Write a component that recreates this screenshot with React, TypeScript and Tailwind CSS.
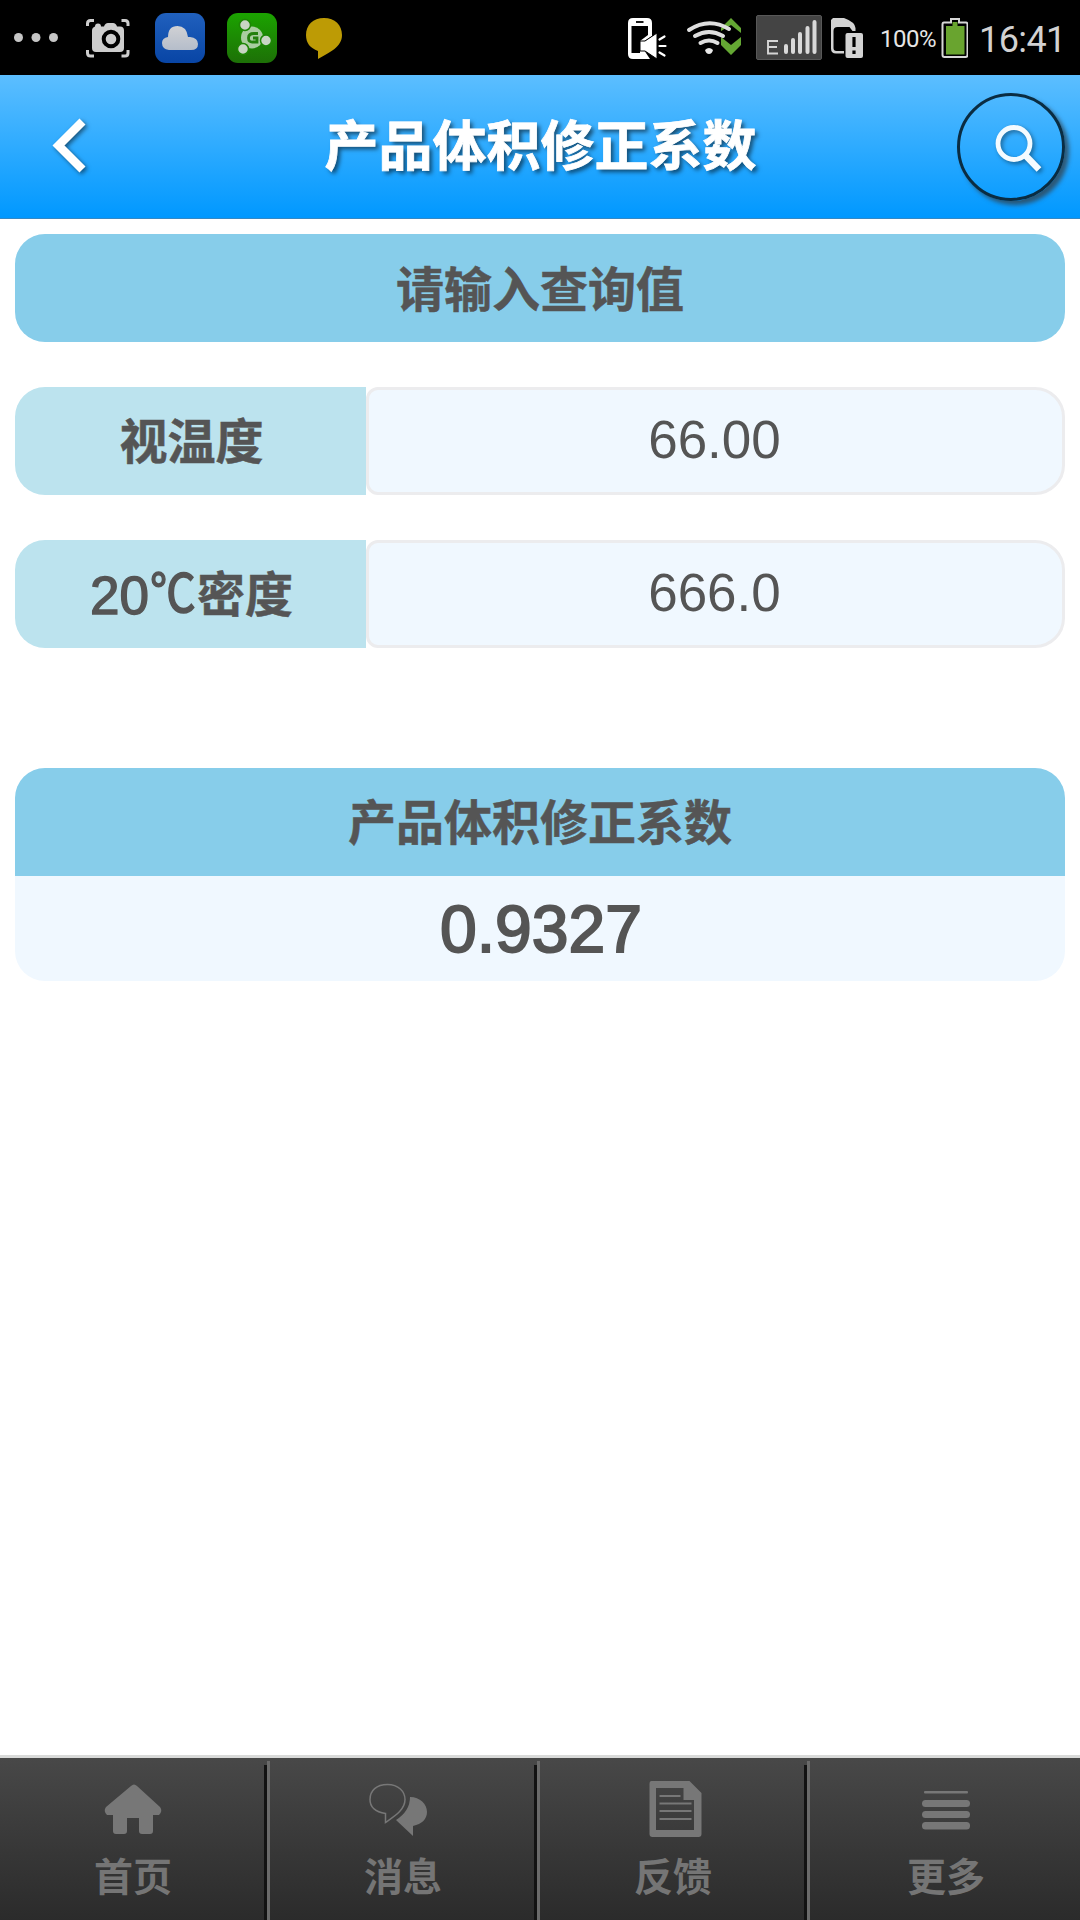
import type { ReactNode } from 'react';

const CJK = "font-['Liberation_Sans','Noto_Sans_CJK_SC',sans-serif]";

function StatusBar() {
  return (
    <div className="h-[75px] bg-black flex items-start shrink-0 font-['Roboto',sans-serif]">
      <svg className="ml-[12px] w-[48px] h-[75px]" viewBox="12 0 48 75" fill="#c6c6c6">
        <circle cx="18.500" cy="37.500" r="4.500" />
        <circle cx="36" cy="37.500" r="4.500" />
        <circle cx="53.500" cy="37.500" r="4.500" />
      </svg>
      <svg className="ml-[24px] w-[48px] h-[75px]" viewBox="84 0 48 75" fill="none">
        <path d="M87.500 26v-2.500q0-3 3-3h3.500M121.500 20.500h3.500q3 0 3 3V26M87.500 50v3q0 3 3 3h3.500M121.500 56h3.500q3 0 3-3v-3" stroke="#cdcdcd" strokeWidth="3" />
        <path d="M95 26.500q0-3 3-3t3 3h3q1-3.500 4-3.500h5q3 0 4 3.500h3q4 0 4 4V48q0 4-4 4H96q-4 0-4-4V30.500q0-3 3-4z" fill="#cdcdcd" />
        <circle cx="111" cy="39" r="7.300" stroke="#000" strokeWidth="4" />
      </svg>
      <svg className="ml-[23px] w-[50px] h-[75px]" viewBox="155 0 50 75">
        <defs>
          <linearGradient id="cloudBg" x1="0" y1="0" x2="0" y2="1">
            <stop offset="0" stopColor="#2060bd" />
            <stop offset="1" stopColor="#0845a5" />
          </linearGradient>
          <linearGradient id="cloudFg" x1="0" y1="0" x2="0" y2="1">
            <stop offset="0" stopColor="#d0d1d4" />
            <stop offset="1" stopColor="#b5bdca" />
          </linearGradient>
        </defs>
        <rect x="155" y="13" width="50" height="50" rx="11" fill="url(#cloudBg)" />
        <path d="M169 50q-7-1-7-7 0-5 6-6 0-11 9.500-11 9 0 10.500 11h2q8 1 8 7 0 6-7 6z" fill="url(#cloudFg)" />
      </svg>
      <svg className="ml-[22px] w-[50px] h-[75px]" viewBox="227 0 50 75">
        <defs>
          <linearGradient id="shareBg" x1="0" y1="0" x2="0" y2="1">
            <stop offset="0" stopColor="#1ba300" />
            <stop offset="1" stopColor="#1d7007" />
          </linearGradient>
        </defs>
        <rect x="227" y="13" width="50" height="50" rx="11" fill="url(#shareBg)" />
        <circle cx="252" cy="37.500" r="11" fill="#a9cda0" />
        <path d="M258 33.500h-4q-5.500 0-5.500 4.500t4.500 4h4v-4h-4" fill="none" stroke="#22800c" strokeWidth="2.800" />
        <g fill="#c8d5c4" stroke="#1d8605" strokeWidth="1.500">
          <circle cx="245" cy="25" r="5.500" />
          <circle cx="266" cy="40.500" r="5.500" />
          <circle cx="243" cy="49" r="5.500" />
        </g>
      </svg>
      <svg className="ml-[28px] w-[38px] h-[75px]" viewBox="305 0 38 75">
        <path d="M324 18c11 0 18 7 18 17 0 12-12 17-24 24v-8c-8-3-12-8-12-16 0-10 7-17 18-17z" fill="#bd9b05" />
      </svg>

      <svg className="ml-auto w-[42px] h-[75px]" viewBox="626 0 42 75">
        <path d="M633 18h14q5 0 5 5v13l-12 8 10 15h-17q-5 0-5-5V23q0-5 5-5z" fill="#fff" />
        <path d="M631.500 26h16.500v9l-8 6v12h-8.500z" fill="#000" />
        <path d="M636 22h7.500" stroke="#000" strokeWidth="1.800" />
        <path d="M640 41h5l12-8v26l-12-8h-5z" fill="#fff" stroke="#000" strokeWidth="1" />
        <path d="M659.500 39.500l5-3M659.500 46h6M659.500 52.500l5 3" stroke="#fff" strokeWidth="2.200" strokeLinecap="round" />
      </svg>
      <svg className="ml-[18px] w-[56px] h-[75px]" viewBox="686 0 56 75" fill="none">
        <path d="M721 31v-3l10-10 10 10v5l-10-8zM721 37l10 8 10-8v8l-10 10-10-10z" fill="#64a733" />
        <g stroke="#dedede" strokeWidth="4" strokeLinecap="round">
          <path d="M689 30q20-13 40-1" />
          <path d="M695 36q14-8 28 0" />
          <path d="M700.500 43q8.500-5 17 0" />
        </g>
        <path d="M705 50q4-4 8 0-1 4-4 4t-4-4z" fill="#e8e8e8" />
      </svg>
      <svg className="ml-[14px] w-[66px] h-[75px]" viewBox="756 0 66 75" fill="none">
        <rect x="756.500" y="15.500" width="65" height="44" rx="1.500" fill="#444" stroke="#585858" />
        <path d="M778 41h-10v12.500h10M768 47h9" stroke="#d5d5d5" strokeWidth="1.900" />
        <path d="M786 46v6M793 40v12M800 34v18M807.500 28v24M814.500 22v30" stroke="#d9d9d9" strokeWidth="4" strokeLinecap="round" />
      </svg>
      <svg className="ml-[9px] w-[34px] h-[75px]" viewBox="831 0 34 75" fill="none">
        <path d="M833 18h11q11 4 11.500 10v3h-3l-3-4h-12q-4 0-4 4v17q0 3 3 3h7.500v2.500h-8q-5 0-5-5V20z" fill="#d3d3d3" />
        <rect x="845.500" y="33" width="17.500" height="25" rx="2" fill="#d3d3d3" />
        <path d="M854 37v10M854 50.500v3.500" stroke="#000" strokeWidth="3.200" />
      </svg>
      <span className="ml-[15px] w-[58px] mt-[23px] text-[24px] leading-[32px] tracking-[-0.5px] text-[#e6e6e6]">100%</span>
      <svg className="ml-[3px] w-[27px] h-[75px]" viewBox="941 0 27 75">
        <path d="M944 22.500h7v-3.500h8v3.500h7q1.500 0 1.500 2V55q0 2-2 2h-21q-2 0-2-2V24.500q0-2 1.500-2z" fill="#000" stroke="#d7d7d7" strokeWidth="2" />
        <path d="M946 26h6.500v-4h5v4h7v28.500h-18.500z" fill="#69a42f" />
      </svg>
      <span className="ml-[11px] w-[101px] mt-[19px] text-[36px] leading-[42px] tracking-[-0.6px] text-[#d2d2d2]">16:41</span>
    </div>
  );
}

function Header() {
  return (
    <header className="h-[144px] shrink-0 flex items-center bg-linear-to-b/srgb from-[#5cbeff] to-[#0098ff] border-b border-[#3588c4]">
      <svg className="w-[123px] h-[144px] drop-shadow-[2px_2px_2px_rgba(0,0,0,0.5)]" viewBox="0 75 123 144" fill="none">
        <path d="M82.500 121.500L58.500 145.500l24 24" stroke="#fff" strokeWidth="8.500" />
      </svg>
      <h1 className="flex-1 text-center text-[54px] leading-[80px] font-bold text-white pl-[1px] mt-[1px] [-webkit-text-stroke:0.8px_#fff] [text-shadow:3px_3px_4px_rgba(0,0,0,0.55)]">产品体积修正系数</h1>
      <button className="mr-[15px] w-[108px] h-[108px] rounded-full border-[3px] border-[#0a2c42] shadow-[4px_4px_4px_rgba(50,70,85,0.8)]">
        <svg className="w-[102px] h-[102px] drop-shadow-[2px_2px_2px_rgba(0,0,0,0.4)]" viewBox="960 96 102 102" fill="none" stroke="#f4fbff">
          <circle cx="1014" cy="143.500" r="16" strokeWidth="4.800" />
          <path d="M1025.500 155.500l13.500 14" strokeWidth="6.500" />
        </svg>
      </button>
    </header>
  );
}

function Field({ label, value }: { label: ReactNode; value: string }) {
  return (
    <div className="flex h-[108px]">
      <div className="w-[351px] pl-[2px] pt-[4px] flex items-center justify-center rounded-l-[30px] bg-[#bce3ee] font-bold text-[48px] [-webkit-text-stroke:0.5px_#555]">
        {label}
      </div>
      <div className="flex-1 pr-[2px] pb-[2px] flex items-center justify-center rounded-l-[12px] rounded-r-[30px] border-[3px] border-[#ececee] bg-[#f0f8ff] text-[53px]">
        {value}
      </div>
    </div>
  );
}

function NavItem({ label, last, children }: { label: string; last?: boolean; children: ReactNode }) {
  return (
    <div className="flex flex-1 h-[162px]">
      <div className="flex-1 flex flex-col items-center">
        <svg className="mt-[18px] w-[66px] h-[66px] shrink-0" viewBox="0 0 66 66" fill="#777">
          {children}
        </svg>
        <span className="mt-[8px] pl-[2px] text-[39px] leading-[56px] font-bold text-[#757575]">{label}</span>
      </div>
      {!last && (
        <div className="flex mt-[3px]">
          <div className="w-[3px] mt-[4px] bg-[#121212]" />
          <div className="w-[3px] bg-[#6a6a6a]" />
        </div>
      )}
    </div>
  );
}

export default function App() {
  const density = (
    <span className="flex items-center">
      <span className="text-[53px] leading-[60px] font-normal [-webkit-text-stroke:1.4px_#555]">20</span>
      <span className="w-[48px] -mt-[5px] flex justify-center text-[52px] leading-[60px] font-normal scale-x-[0.88] [-webkit-text-stroke:1.6px_#555]">℃</span>
      <span>密度</span>
    </span>
  );

  return (
    <div className={`w-[1080px] h-[1920px] flex flex-col overflow-hidden bg-white ${CJK}`}>
      <StatusBar />
      <Header />
      <main className="flex-1 px-[15px] pt-[15px] text-[#555]">
        <h2 className="h-[108px] pt-[5px] flex items-center justify-center rounded-[30px] bg-[#87cdea] text-[48px] font-bold [-webkit-text-stroke:0.5px_#555]">请输入查询值</h2>
        <div className="mt-[45px] flex flex-col gap-[45px]">
          <Field label="视温度" value="66.00" />
          <Field label={density} value="666.0" />
        </div>
        <section className="mt-[120px] overflow-hidden rounded-[30px]">
          <h2 className="h-[108px] pt-[4px] flex items-center justify-center bg-[#87cdea] text-[48px] font-bold [-webkit-text-stroke:0.5px_#555]">产品体积修正系数</h2>
          <div className="h-[105px] pl-[2px] pt-[2px] flex items-center justify-center bg-[#f0f8ff] text-[66px] [-webkit-text-stroke:2px_#555]">0.9327</div>
        </section>
      </main>
      <nav className="shrink-0 flex border-t-[3px] border-[#d9dad9] bg-linear-to-b from-[#484848] to-[#2b2b2b]">
        <NavItem label="首页">
          <path d="M32 10q3-3 6 0l23 21q3 4-1 8h-6v16q0 3-3 3h-8q-3 0-3-3V42H28v13q0 3-3 3h-8q-3 0-3-3V39H8q-4-4-1-8z" />
        </NavItem>
        <NavItem label="消息">
          <path d="M18.500 8.500c11 0 17.500 7 17.500 15 0 10-9.500 16-19.500 23v-9C6.500 36 1 31 1 23.500c0-9 6.500-15 17.500-15z" fill="none" stroke="#777" strokeWidth="1.500" />
          <path d="M41 21c10 0 17 7 17 15 0 7-5 12-14 14v10L27 44q14-9 14-23z" />
        </NavItem>
        <NavItem label="反馈">
          <path fillRule="evenodd" d="M12.500 5h38l12 12v41q0 3-3 3h-46q-3 0-3-3V8q0-3 2-3zm4.500 7v42h38V24H44.500V12z" />
          <path d="M20.500 20h21M20.500 27.500h32M20.500 35h32M20.500 43h32" stroke="#777" strokeWidth="2" />
        </NavItem>
        <NavItem label="更多" last>
          <rect x="12" y="15" width="44" height="2.500" rx="1" />
          <rect x="10" y="24" width="48" height="7" rx="3.500" />
          <rect x="10" y="35" width="48" height="7" rx="3.500" />
          <rect x="10" y="46" width="48" height="7.500" rx="3.500" />
        </NavItem>
      </nav>
    </div>
  );
}
